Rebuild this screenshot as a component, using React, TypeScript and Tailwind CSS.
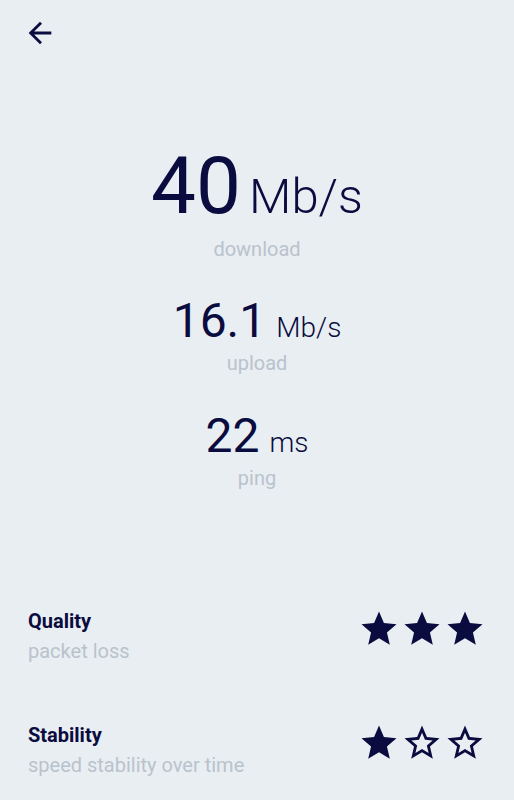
import React from 'react';

const navy = 'text-[#0a0c3f]';

function BackArrow() {
  return (
    <svg width="34" height="34" viewBox="0 0 24 24" className="block fill-[#0a0c3f]">
      <path d="M20 11H7.83l5.59-5.59L12 4l-8 8 8 8 1.41-1.41L7.83 13H20v-2z" />
    </svg>
  );
}

function Star({ filled }: { filled: boolean }) {
  return (
    <svg width="42" height="42" viewBox="0 0 24 24" className="block fill-[#0a0c3f]">
      {filled ? (
        <path d="M12 17.27L18.18 21l-1.64-7.03L22 9.24l-7.19-.61L12 2 9.19 8.63 2 9.24l5.46 4.73L5.82 21z" />
      ) : (
        <path d="M22 9.24l-7.19-.62L12 2 9.19 8.63 2 9.24l5.46 4.73L5.82 21 12 17.27 18.18 21l-1.63-7.03L22 9.24zM12 15.4l-3.76 2.27 1-4.28-3.32-2.88 4.38-.38L12 6.1l1.71 4.04 4.38.38-3.32 2.88 1 4.28L12 15.4z" />
      )}
    </svg>
  );
}

function Metric({ value, unit, label, className }: { value: string; unit: string; label: string; className?: string }) {
  return (
    <div className={`flex flex-col items-center ${className ?? ''}`}>
      <div className={`flex items-baseline justify-center leading-none ${navy}`}>
        <span className="text-[48px]">{value}</span>
        <span className="ml-2.5 text-[28px] font-light">{unit}</span>
      </div>
      <div className="mt-1 text-[20px] leading-[28px] text-[#b9c3cd]">{label}</div>
    </div>
  );
}

function RatingRow({ title, subtitle, stars, className }: { title: string; subtitle: string; stars: number; className?: string }) {
  return (
    <div className={`flex items-start justify-between px-7 ${className ?? ''}`}>
      <div>
        <div className={`text-[20px] font-bold leading-[30px] ${navy}`}>{title}</div>
        <div className="text-[20px] leading-[30px] text-[#b9c3cd]">{subtitle}</div>
      </div>
      <div className="mt-[1.5px] flex gap-px">
        {[0, 1, 2].map((i) => (
          <Star key={i} filled={i < stars} />
        ))}
      </div>
    </div>
  );
}

export default function App() {
  return (
    <div className="min-h-screen bg-[#e9eef2] font-['Roboto',sans-serif]">
      <div className="pl-[23px] pt-4">
        <BackArrow />
      </div>

      <main className="mt-[96px]">
        <div className="flex flex-col items-center">
          <div className={`flex items-baseline justify-center leading-none ${navy}`}>
            <span className="text-[80px]">40</span>
            <span className="ml-2 text-[49px] font-light">Mb/s</span>
          </div>
          <div className="mt-[9px] text-[20px] leading-[28px] text-[#b9c3cd]">download</div>
        </div>

        <Metric className="mt-[34px]" value="16.1" unit="Mb/s" label="upload" />
        <Metric className="mt-[35px]" value="22" unit="ms" label="ping" />
      </main>

      <section className="mt-[114px]">
        <RatingRow title="Quality" subtitle="packet loss" stars={3} />
        <RatingRow className="mt-[54px]" title="Stability" subtitle="speed stability over time" stars={1} />
      </section>
    </div>
  );
}
